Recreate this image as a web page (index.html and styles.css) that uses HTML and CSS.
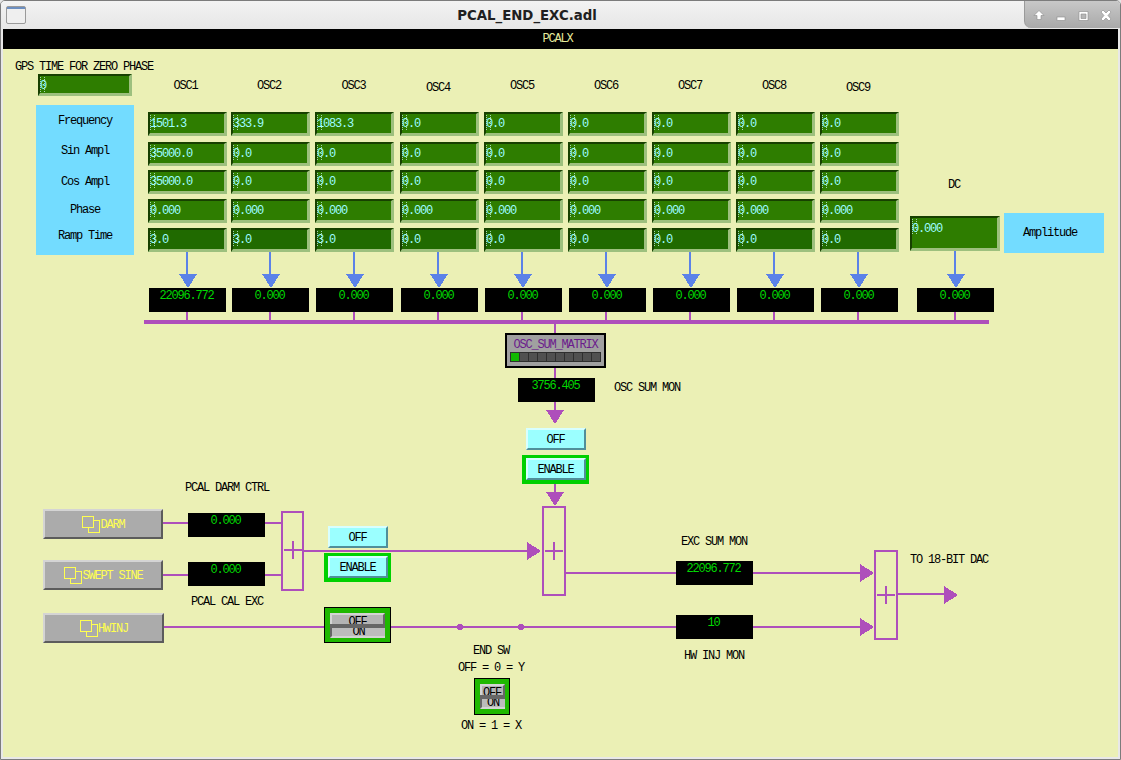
FILE: index.html
```html
<!DOCTYPE html>
<html lang="en">
<head>
<meta charset="utf-8">
<title>PCAL_END_EXC.adl</title>
<link rel="stylesheet" href="styles.css">
</head>
<body>
<div class="window">
  <header class="titlebar">
    <svg class="appicon" width="20" height="18" viewBox="0 0 20 18"><rect x="0.5" y="0.5" width="19" height="17" rx="1.5" fill="#efefef" stroke="#9a9a9a"/><rect x="1" y="1" width="18" height="2" fill="#6d8fc0"/></svg>
    <h1 class="wintitle">PCAL_END_EXC.adl</h1>
    <div class="winctl">
      <svg width="97" height="27" viewBox="0 0 97 27">
        <g fill="#fff" stroke="#8a8a8a" stroke-width="0.6">
          <path d="M15 9.5l5 5h-3v4h-4v-4h-3z"/>
          <rect x="33" y="16" width="8" height="3.5"/>
          <path fill-rule="evenodd" d="M55 10.5h9v9h-9zM57 13v4.500h5V13z"/>
          <path d="M77 11l2-2 3 3 3-3 2 2-3 3.500 3 3.500-2 2-3-3-3 3-2-2 3-3.500z"/>
        </g>
      </svg>
    </div>
  </header>
  <main class="panel">
    <div class="banner">PCALX</div>
    <div class="canvas">
      <svg class="wires" width="1121" height="760" viewBox="0 0 1121 760">
        <g class="blue">
          <rect x="186" y="252" width="2" height="22"/><polygon points="179,274 197,274 188,288"/>
          <rect x="269" y="252" width="2" height="22"/><polygon points="262,274 280,274 271,288"/>
          <rect x="353" y="252" width="2" height="22"/><polygon points="346,274 364,274 355,288"/>
          <rect x="437" y="252" width="2" height="22"/><polygon points="430,274 448,274 439,288"/>
          <rect x="521" y="252" width="2" height="22"/><polygon points="514,274 532,274 523,288"/>
          <rect x="605" y="252" width="2" height="22"/><polygon points="598,274 616,274 607,288"/>
          <rect x="689" y="252" width="2" height="22"/><polygon points="682,274 700,274 691,288"/>
          <rect x="773" y="252" width="2" height="22"/><polygon points="766,274 784,274 775,288"/>
          <rect x="857" y="252" width="2" height="22"/><polygon points="850,274 868,274 859,288"/>
          <rect x="954" y="251" width="2" height="23"/><polygon points="947,274 965,274 956,288"/>
        </g>
        <g class="purple">
          <rect x="144" y="320" width="845" height="4"/>
          <rect x="186" y="312" width="2" height="8"/><rect x="269" y="312" width="2" height="8"/>
          <rect x="353" y="312" width="2" height="8"/><rect x="437" y="312" width="2" height="8"/>
          <rect x="521" y="312" width="2" height="8"/><rect x="605" y="312" width="2" height="8"/>
          <rect x="689" y="312" width="2" height="8"/><rect x="773" y="312" width="2" height="8"/>
          <rect x="857" y="312" width="2" height="8"/><rect x="954" y="312" width="2" height="8"/>
          <rect x="554" y="324" width="2" height="9"/><rect x="554" y="368" width="2" height="10"/>
          <rect x="554" y="402" width="2" height="8"/><polygon points="546,410 564,410 555,424"/>
          <rect x="554" y="484" width="2" height="8"/><polygon points="546,492 564,492 555,506"/>
          <rect x="163" y="522" width="25" height="2"/><rect x="265" y="522" width="16" height="2"/>
          <rect x="163" y="574" width="25" height="2"/><rect x="265" y="574" width="16" height="2"/>
          <rect x="304" y="550" width="223" height="2"/><polygon points="527,542 541,551 527,560"/>
          <rect x="566" y="572" width="294" height="2"/><polygon points="860,564 874,573 860,582"/>
          <rect x="164" y="626" width="161" height="2"/><rect x="391" y="626" width="285" height="2"/>
          <rect x="753" y="626" width="107" height="2"/><polygon points="860,618 874,627 860,636"/>
          <rect x="898" y="593" width="46" height="2"/><polygon points="944,586 958,595 944,604"/>
          <circle cx="460" cy="627" r="3"/><circle cx="521" cy="627" r="3"/>
          <rect class="sum" x="282" y="512" width="21" height="78"/>
          <rect x="292" y="541" width="2" height="18"/><rect x="284" y="549" width="18" height="2"/>
          <rect class="sum" x="543" y="507" width="22" height="88"/>
          <rect x="553" y="542" width="2" height="18"/><rect x="545" y="550" width="18" height="2"/>
          <rect class="sum" x="875" y="551" width="22" height="88"/>
          <rect x="885" y="586" width="2" height="18"/><rect x="877" y="594" width="18" height="2"/>
        </g>
      </svg>

      <span class="lbl gps">GPS TIME FOR ZERO PHASE</span>
      <div class="entry gpsval">0</div>

      <div class="oschead">
        <span class="hd">OSC1</span><span class="hd">OSC2</span><span class="hd">OSC3</span>
        <span class="hd lo">OSC4</span><span class="hd">OSC5</span><span class="hd">OSC6</span>
        <span class="hd">OSC7</span><span class="hd">OSC8</span><span class="hd lo">OSC9</span>
      </div>

      <div class="rowlabels">
        <span class="r1">Frequency</span><span class="r2">Sin Ampl</span><span class="r3">Cos Ampl</span><span class="r4">Phase</span><span class="r5">Ramp Time</span>
      </div>

      <div class="oscgrid">
        <div class="entry">1501.3</div><div class="entry">333.9</div><div class="entry">1083.3</div><div class="entry">0.0</div><div class="entry">0.0</div><div class="entry">0.0</div><div class="entry">0.0</div><div class="entry">0.0</div><div class="entry">0.0</div>
        <div class="entry">35000.0</div><div class="entry">0.0</div><div class="entry">0.0</div><div class="entry">0.0</div><div class="entry">0.0</div><div class="entry">0.0</div><div class="entry">0.0</div><div class="entry">0.0</div><div class="entry">0.0</div>
        <div class="entry">35000.0</div><div class="entry">0.0</div><div class="entry">0.0</div><div class="entry">0.0</div><div class="entry">0.0</div><div class="entry">0.0</div><div class="entry">0.0</div><div class="entry">0.0</div><div class="entry">0.0</div>
        <div class="entry">0.000</div><div class="entry">0.000</div><div class="entry">0.000</div><div class="entry">0.000</div><div class="entry">0.000</div><div class="entry">0.000</div><div class="entry">0.000</div><div class="entry">0.000</div><div class="entry">0.000</div>
        <div class="entry dark">3.0</div><div class="entry dark">3.0</div><div class="entry dark">3.0</div><div class="entry dark">0.0</div><div class="entry dark">0.0</div><div class="entry dark">0.0</div><div class="entry dark">0.0</div><div class="entry dark">0.0</div><div class="entry dark">0.0</div>
      </div>

      <div class="mongrid">
        <div class="mon">22096.772</div><div class="mon">0.000</div><div class="mon">0.000</div><div class="mon">0.000</div><div class="mon">0.000</div><div class="mon">0.000</div><div class="mon">0.000</div><div class="mon">0.000</div><div class="mon">0.000</div>
      </div>

      <span class="lbl dc">DC</span>
      <div class="entry dcval">0.000</div>
      <div class="amp">Amplitude</div>
      <div class="mon dcmon">0.000</div>

      <div class="matrix">
        <div class="mname">OSC_SUM_MATRIX</div>
        <div class="leds"><i class="on"></i><i></i><i></i><i></i><i></i><i></i><i></i><i></i><i></i><i></i></div>
      </div>
      <div class="mon summon">3756.405</div>
      <span class="lbl summonl">OSC SUM MON</span>
      <button class="cbtn off1">OFF</button>
      <div class="enablebox en1"><button class="cbtn">ENABLE</button></div>

      <span class="lbl darmctl">PCAL DARM CTRL</span>
      <button class="rel darm"><svg class="relic" width="18" height="17" viewBox="0 0 18 17"><path d="M6 11.500v5h11v-12h-5M.5.500h11v11H.5z"/></svg>DARM</button>
      <div class="mon darmmon">0.000</div>
      <button class="rel swept"><svg class="relic" width="18" height="17" viewBox="0 0 18 17"><path d="M6 11.500v5h11v-12h-5M.5.500h11v11H.5z"/></svg>SWEPT SINE</button>
      <div class="mon sweptmon">0.000</div>
      <span class="lbl calexc">PCAL CAL EXC</span>
      <button class="rel hwinj"><svg class="relic" width="18" height="17" viewBox="0 0 18 17"><path d="M6 11.500v5h11v-12h-5M.5.500h11v11H.5z"/></svg>HWINJ</button>

      <button class="cbtn off2">OFF</button>
      <div class="enablebox en2"><button class="cbtn">ENABLE</button></div>
      <div class="switch sw1"><div class="choice"><span class="seg up">OFF</span><span class="seg down">ON</span></div></div>

      <span class="lbl excl">EXC SUM MON</span>
      <div class="mon excmon">22096.772</div>
      <div class="mon hwmon">10</div>
      <span class="lbl hwl">HW INJ MON</span>
      <span class="lbl dacl">TO 18-BIT DAC</span>

      <span class="lbl endsw">END SW</span>
      <span class="lbl offy">OFF = 0 = Y</span>
      <div class="switch sw2"><div class="choice"><span class="seg up">OFF</span><span class="seg down">ON</span></div></div>
      <span class="lbl onx">ON = 1 = X</span>
    </div>
  </main>
</div>
</body>
</html>
```
FILE: styles.css
```css
* { box-sizing: border-box; }
html, body { margin: 0; padding: 0; background: #e6e6e6; }
.window {
  width: 1121px; height: 760px; display: flex; flex-direction: column;
  border: 1px solid #7c7c7c; border-radius: 5px 5px 0 0; background: #e8e8e8; overflow: hidden;
}
.titlebar {
  height: 28px; flex: none; display: flex; align-items: flex-start;
  background: linear-gradient(#f3f3f3, #e6e6e6);
}
.appicon { margin: 5px 0 0 5px; flex: none; }
.wintitle {
  flex: 1; margin: 6px 0 0; padding-left: 4px; text-align: center; font: bold 13.300px/17px "DejaVu Sans", sans-serif; color: #202020;
}
.winctl {
  width: 96px; height: 27px; flex: none; overflow: hidden; border-bottom-left-radius: 7px;
  background: linear-gradient(#c8c8c8, #a9a9a9); border-left: 1px solid #9a9a9a;
}
.winctl svg { display: block; margin-left: -1px; }
.panel { flex: 1; margin: 0 2px 2px; position: relative; background: #ebf0b5; }
.banner {
  height: 20px; background: #000; color: #e6ec9e; text-align: center; padding-right: 6px;
  font: 12px/21px "Liberation Mono", monospace; letter-spacing: -1.2px;
}
.canvas {
  position: absolute; left: -3px; top: -29px; width: 1121px; height: 760px;
  font: 12px/16px "Liberation Mono", monospace; letter-spacing: -1.2px; color: #000;
}
.wires { position: absolute; left: 0; top: 0; shape-rendering: crispEdges; }
.blue { fill: #5b82e8; }
.purple { fill: #ae4fbb; }
.purple .sum { fill: none; stroke: #ae4fbb; stroke-width: 2; }

.lbl { position: absolute; white-space: pre; }
.gps { left: 15px; top: 59px; }
.dc { left: 934px; width: 40px; top: 177px; text-align: center; }
.summonl { left: 614px; top: 380px; }
.darmctl { left: 147px; width: 160px; top: 480px; text-align: center; }
.calexc { left: 147px; width: 160px; top: 594px; text-align: center; }
.excl { left: 634px; width: 160px; top: 534px; text-align: center; }
.hwl { left: 634px; width: 160px; top: 648px; text-align: center; }
.dacl { left: 910px; top: 552px; }
.endsw { left: 441px; width: 100px; top: 643px; text-align: center; }
.offy { left: 441px; width: 100px; top: 660px; text-align: center; }
.onx { left: 441px; width: 100px; top: 718px; text-align: center; }

.oschead {
  position: absolute; left: 144px; top: 78px; display: grid;
  grid-template-columns: 83px 84px 85px 84px 84px 84px 84px 84px 84px; text-align: center;
}
.hd { display: block; }
.lo { margin-top: 2px; }

.rowlabels {
  position: absolute; left: 36px; top: 105px; width: 98px; height: 150px; background: #73dcff;
  display: grid; grid-template-rows: 30px 31px 28px 26px 35px; padding-top: 8px; text-align: center;
}

.oscgrid, .mongrid {
  position: absolute; display: grid;
  grid-template-columns: 83px 84px 85px 84px 84px 84px 84px 84px 79px;
}
.oscgrid { left: 148px; top: 112px; grid-template-rows: 30px 28px 29px 29px 24px; }
.mongrid { left: 149px; top: 288px; }

.entry {
  position: relative; isolation: isolate; width: 79px; height: 24px; padding: 2px 0 0 0;
  background: #2e7d00; color: #9dfcff;
  border-style: solid; border-width: 2px 3px 3px 2px;
  border-color: #174000 #9dc07e #9dc07e #174000;
  white-space: pre;
}
.entry::before {
  content: ""; position: absolute; z-index: -1; left: 0; top: 1px; width: 3px; height: 15px;
  border-left: 1px dotted #d8ffff; border-right: 1px dotted #d8ffff; opacity: .7;
}
.entry.dark { background: #206a00; }
.gpsval { position: absolute; left: 38px; top: 74px; width: 94px; height: 22px; }
.dcval { position: absolute; left: 910px; top: 216px; width: 90px; height: 35px; padding-top: 3px; }
.amp {
  position: absolute; left: 1004px; top: 213px; width: 100px; height: 40px; background: #73dcff;
  line-height: 40px; text-align: center; padding-right: 8px;
}

.mon {
  width: 77px; height: 24px; background: #000; color: #00d800; text-align: center; padding-right: 2px;
}
.dcmon, .summon, .darmmon, .sweptmon, .excmon, .hwmon { position: absolute; }
.dcmon { left: 917px; top: 288px; }
.summon { left: 518px; top: 378px; }
.darmmon { left: 188px; top: 513px; }
.sweptmon { left: 188px; top: 562px; }
.excmon { left: 676px; top: 561px; }
.hwmon { left: 676px; top: 615px; }

.matrix {
  position: absolute; left: 505px; top: 333px; width: 101px; height: 35px;
  border: 2px solid #000; background: #a0a0a0; padding: 3px 3px 0;
}
.mname { color: #6b1b8c; text-align: center; height: 14px; line-height: 14px; }
.leds { display: flex; gap: 1px; height: 10px; padding: 1px; background: #2e2e2e; margin-top: 0; }
.leds i { flex: 1; background: #505050; }
.leds i.on { background: #10b800; }

button {
  font: inherit; letter-spacing: inherit; margin: 0; cursor: default; display: block; color: inherit;
}
.cbtn {
  width: 60px; height: 22px; background: #9bffff; padding: 1px 1px 0 0;
  border-style: solid; border-width: 2px; border-color: #d8ffff #508f9a #508f9a #d8ffff;
}
.off1 { position: absolute; left: 526px; top: 428px; }
.off2 { position: absolute; left: 328px; top: 526px; }
.enablebox {
  position: absolute; width: 67px; height: 29px; padding: 3px 3px 0 4px; background: #00d000;
}
.en1 { left: 522px; top: 455px; }
.en2 { left: 324px; top: 553px; }

.rel {
  position: absolute; left: 43px; width: 120px; height: 30px; background: #ababab; color: #ffff50; padding: 1px 0 0 1px;
  border-style: solid; border-width: 2px; border-color: #d4d4d4 #5c5c5c #5c5c5c #d4d4d4;
  display: flex; align-items: center; justify-content: center; gap: 0;
}
.relic { flex: none; fill: none; stroke: #ffff50; stroke-width: 1; shape-rendering: crispEdges; }
.darm { top: 509px; }
.swept { top: 560px; }
.hwinj { top: 613px; width: 121px; }

.switch {
  position: absolute; background: #1fb800; border: 1px solid #000; display: flex; align-items: center; justify-content: center;
}
.sw1 { left: 324px; top: 607px; width: 67px; height: 36px; }
.sw2 { left: 474px; top: 678px; width: 36px; height: 37px; }
.choice { display: flex; flex-direction: column; width: 55px; height: 25px; background: #d0d0d0; }
.sw2 .choice { width: 25px; }
.seg { display: block; overflow: hidden; text-align: center; color: #000; }
.seg.up {
  height: 11px; line-height: 14px; background: #b4b4b4;
  border-style: solid; border-width: 2px 2px 0; border-color: #d4d4d4 #666 #666 #d4d4d4;
}
.seg.down {
  height: 14px; line-height: 8px; background: #bcbcbc;
  border-style: solid; border-width: 4px 0 2px 2px; border-color: #666 #d4d4d4 #d4d4d4 #666;
}
```
